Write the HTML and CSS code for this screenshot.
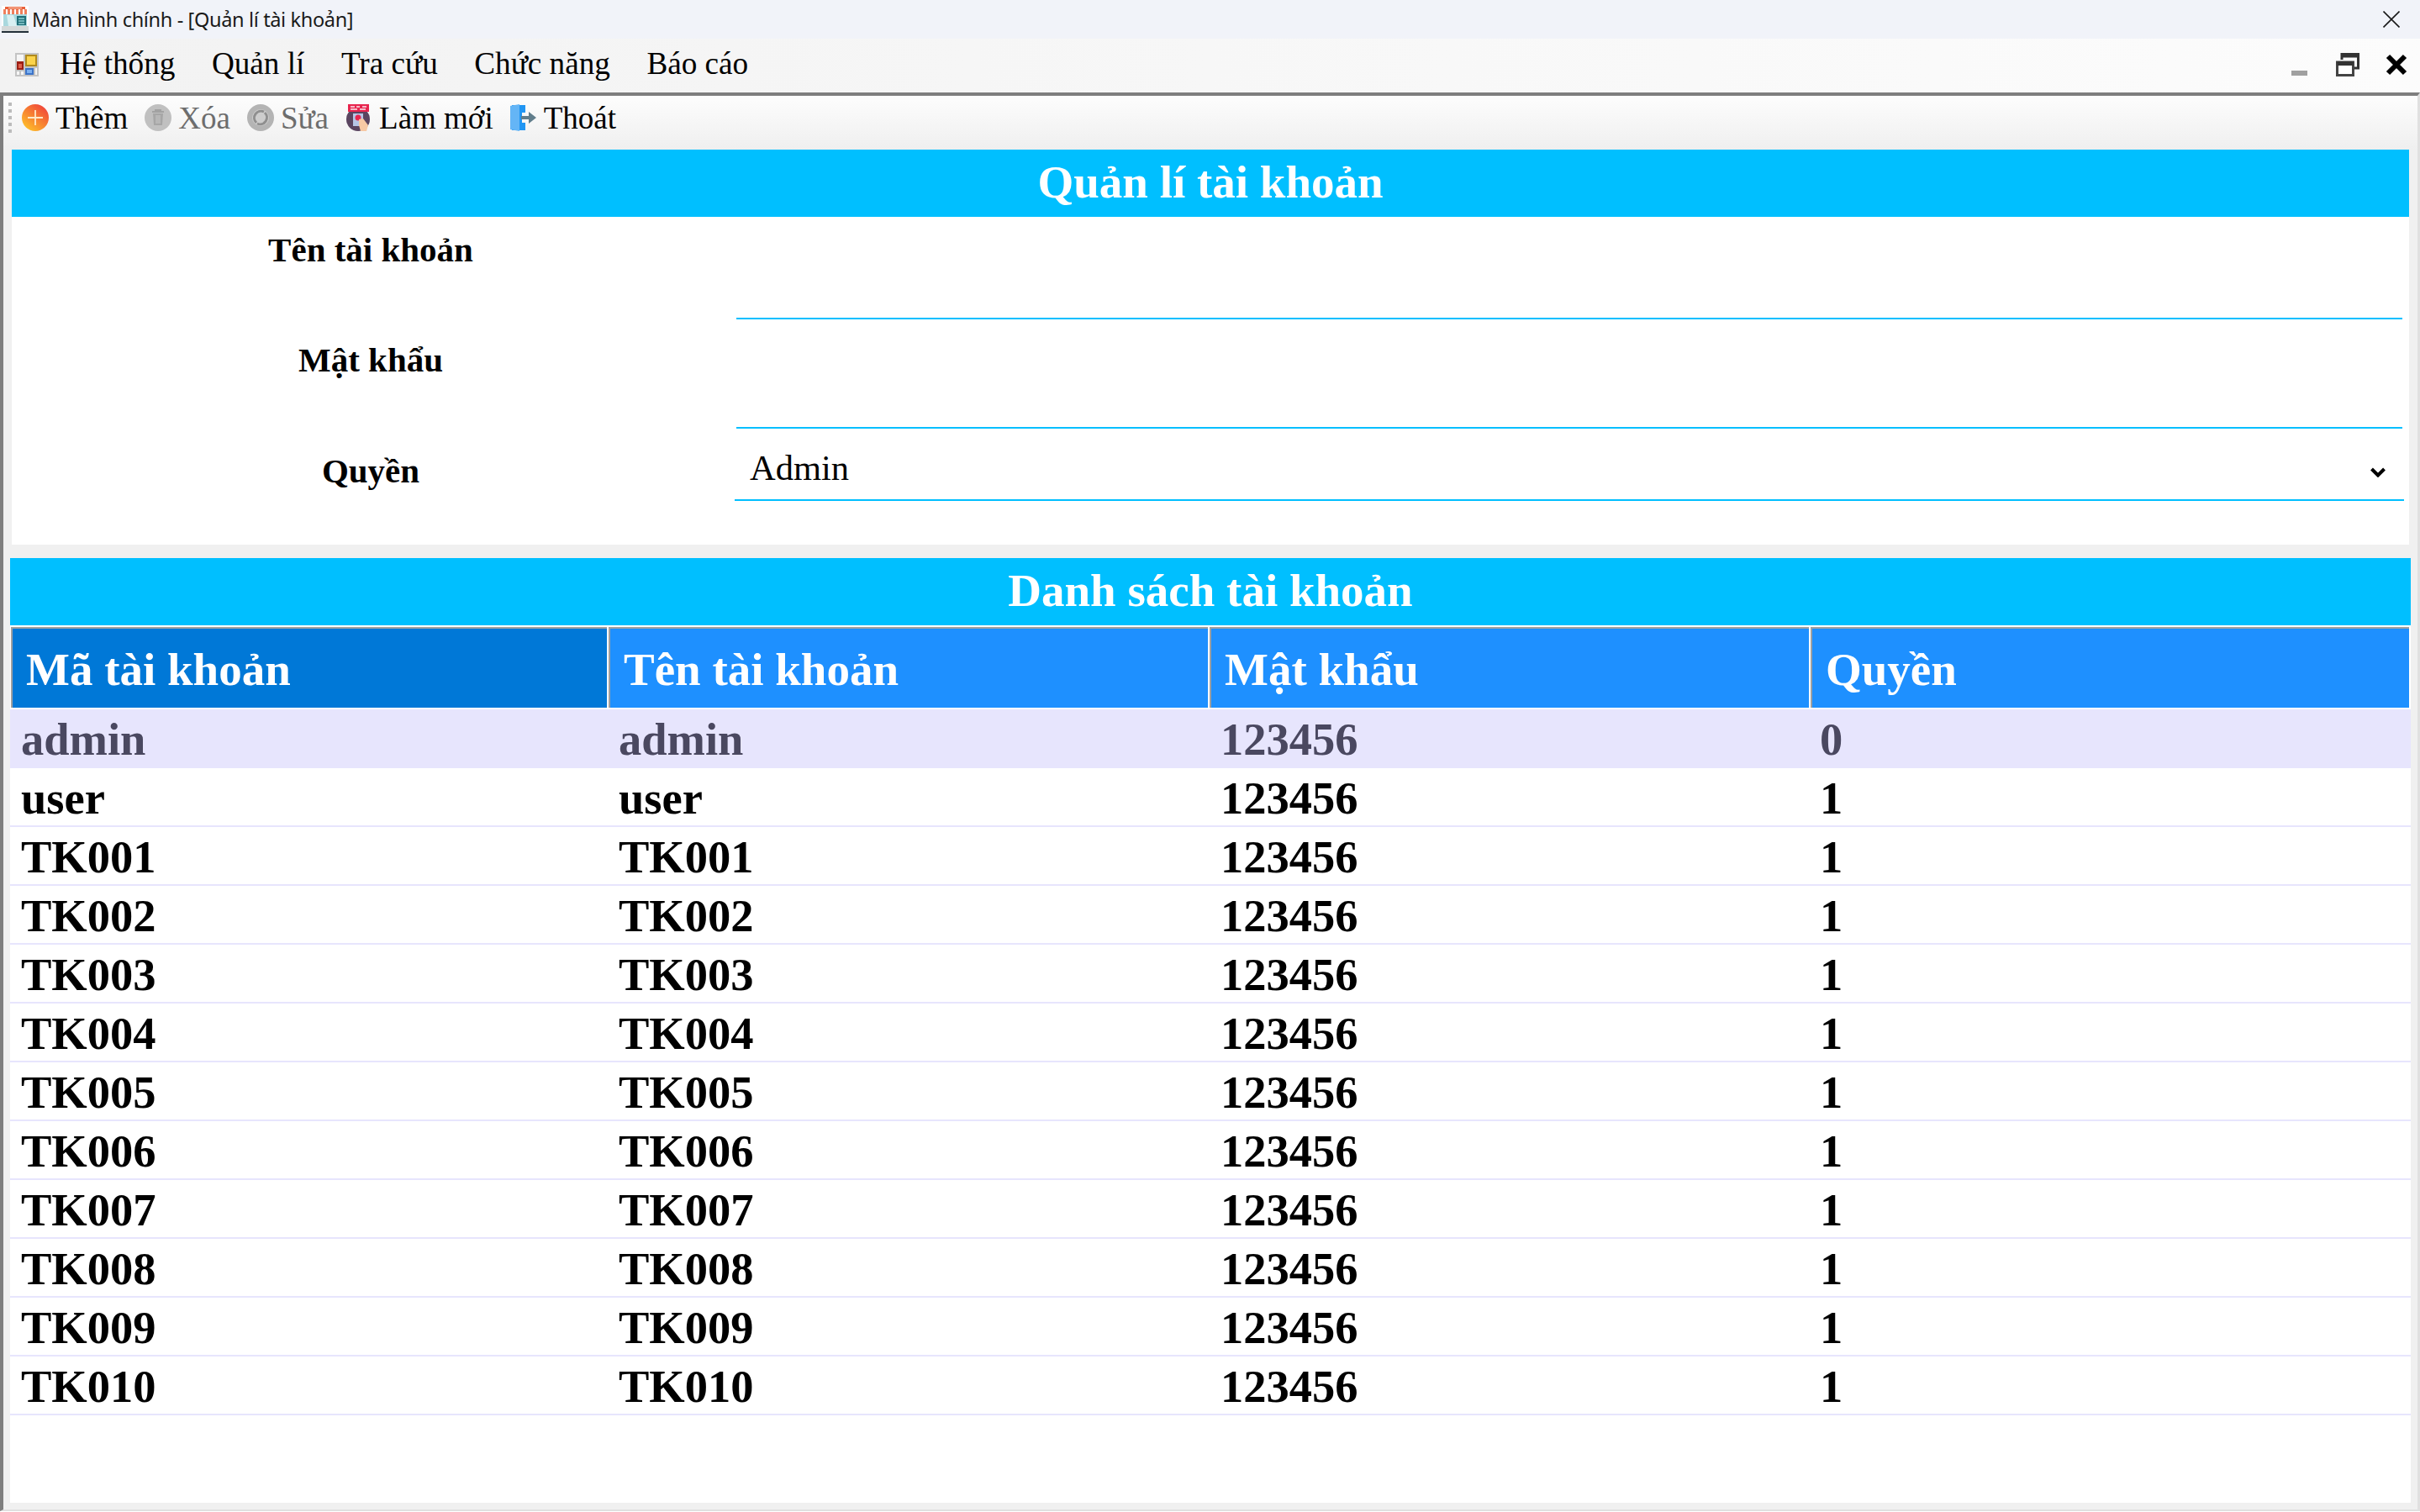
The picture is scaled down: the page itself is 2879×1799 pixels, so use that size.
FILE: index.html
```html
<!DOCTYPE html>
<html lang="vi">
<head>
    <meta charset="UTF-8">
    <meta name="viewport" content="width=device-width, initial-scale=1.0">
    <title>Màn hình chính - [Quản lí tài khoản]</title>
    <link rel="stylesheet" href="styles.css">
</head>
<body>
    <div class="titlebar">
        <svg class="app-icon" viewBox="0 0 32 32">
            <rect width="32" height="32" fill="#fff"/>
            <rect x="4" y="1" width="24" height="3" fill="#e8603c"/>
            <rect x="8" y="2" width="16" height="1" fill="#fbd2bc"/>
            <rect x="2" y="4" width="28" height="6" fill="#ef7f5c"/>
            <path d="M6 4v6M11 4v6M16 4v6M21 4v6M26 4v6" stroke="#fff" stroke-width="2"/>
            <rect x="2" y="10" width="28" height="14" fill="#a9d8de"/>
            <path d="M6 11H14L18 24H8Z" fill="#d8f0f2"/>
            <rect x="18" y="12" width="11" height="11" fill="#1f6f78"/>
            <path d="M20 15h7M20 18h7M20 21h7" stroke="#8fd0d2" stroke-width="1.500"/>
            <rect x="0" y="24" width="32" height="6" fill="#d4d8d8"/>
            <rect x="0" y="30" width="32" height="2" fill="#23303a"/>
        </svg>
        <span class="app-title">Màn hình chính - [Quản lí tài khoản]</span>
        <svg class="win-close" viewBox="0 0 20 20">
            <path d="M0.5 0.5L19.5 19.5M19.5 0.5L0.5 19.5" stroke="#1a1a1a" stroke-width="1.600"/>
        </svg>
    </div>

    <div class="menubar">
        <svg class="menu-icon" viewBox="0 0 28 28">
            <rect width="28" height="28" fill="#c4c4c4"/>
            <rect x="2" y="2" width="8" height="8" fill="#f6f6f6"/>
            <rect x="12" y="2" width="14" height="14" fill="#b08a1c"/>
            <rect x="14" y="4" width="10" height="10" fill="#fbd34a"/>
            <rect x="2" y="10" width="8" height="10" fill="#9c1f14"/>
            <rect x="4" y="13" width="4" height="5" fill="#e0604c"/>
            <rect x="12" y="18" width="10" height="8" fill="#3d74c8"/>
            <rect x="14" y="20" width="6" height="4" fill="#7cb0f0"/>
            <rect x="2" y="22" width="3" height="4" fill="#f6f6f6"/>
            <rect x="7" y="22" width="3" height="4" fill="#f6f6f6"/>
            <rect x="24" y="18" width="2" height="8" fill="#f6f6f6"/>
        </svg>
        <nav class="menu">
            <a>Hệ thống</a>
            <a>Quản lí</a>
            <a>Tra cứu</a>
            <a>Chức năng</a>
            <a>Báo cáo</a>
        </nav>
        <div class="mdi-buttons">
            <span class="mdi-min"></span>
            <svg class="mdi-restore" viewBox="0 0 28 28">
                <path d="M7 8V1.500H26.500V18H21" fill="none" stroke="#333" stroke-width="3"/>
                <rect x="7" y="2" width="19" height="3.500" fill="#333"/>
                <rect x="1.500" y="11" width="19" height="15.500" fill="#fff" stroke="#444" stroke-width="3"/>
                <rect x="1.500" y="10" width="19" height="5" fill="#333"/>
            </svg>
            <svg class="mdi-close" viewBox="0 0 26 26">
                <path d="M3 3L23 23M23 3L3 23" stroke="#000" stroke-width="6"/>
            </svg>
        </div>
    </div>

    <div class="frame">
        <div class="toolbar">
            <span class="grip"></span>
            <button class="tool">
                <svg viewBox="0 0 32 32">
                    <defs>
                        <linearGradient id="plus-bg" x1="0.9" y1="0" x2="0.1" y2="1">
                            <stop offset="0" stop-color="#ef3b3b"/>
                            <stop offset="1" stop-color="#ffc928"/>
                        </linearGradient>
                    </defs>
                    <circle cx="16" cy="16" r="16" fill="url(#plus-bg)"/>
                    <path d="M16 7V25M7 16H25" stroke="#ffe9c8" stroke-width="1.800"/>
                </svg>
                Thêm
            </button>
            <button class="tool disabled">
                <svg viewBox="0 0 32 32">
                    <circle cx="16" cy="16" r="16" fill="#c0c0c0"/>
                    <path d="M9 9H23M13 9V7H19V9" fill="none" stroke="#a2a2a2" stroke-width="2"/>
                    <path d="M10 11H22L21 25H11Z" fill="#a6a6a6"/>
                    <path d="M14 13V23M16 13V23M18 13V23" stroke="#c8c8c8" stroke-width="1"/>
                </svg>
                Xóa
            </button>
            <button class="tool disabled">
                <svg viewBox="0 0 32 32">
                    <circle cx="16" cy="16" r="16" fill="#b4b4b4"/>
                    <circle cx="16" cy="16" r="10" fill="#cdcdcd"/>
                    <path d="M20 9A8 8 0 0 0 11 22M12 23A8 8 0 0 0 21 10" fill="none" stroke="#8f8f8f" stroke-width="3"/>
                </svg>
                Sửa
            </button>
            <button class="tool">
                <svg viewBox="0 0 32 32">
                    <circle cx="15" cy="18" r="14" fill="#5a4560"/>
                    <rect x="3" y="0" width="25" height="9" fill="#e8254f"/>
                    <path d="M6 3h5M13 3h4M20 3h5M6 6h8M17 6h7" stroke="#f6b8c6" stroke-width="2"/>
                    <rect x="9" y="11" width="12" height="15" fill="#b6c6e6"/>
                    <circle cx="15" cy="16" r="3.500" fill="#e8254f"/>
                    <path d="M16 18L21 17L27 25L25 32H18L16 25Z" fill="#f7c9a4"/>
                </svg>
                Làm mới
            </button>
            <button class="tool">
                <svg viewBox="0 0 32 32">
                    <path d="M2 1H18V10H14V22H18V31H2Z" fill="#2196f3"/>
                    <path d="M0 2L11 0V32L0 30Z" fill="#64b5f6"/>
                    <path d="M13 14H22V9L31 16L22 23V18H13Z" fill="#607d8b"/>
                </svg>
                Thoát
            </button>
        </div>

        <div class="content">
            <h2 class="band">Quản lí tài khoản</h2>
            <form class="account-form">
                <label class="field-label label-name">Tên tài khoản</label>
                <div class="field-line"></div>
                <label class="field-label label-pass">Mật khẩu</label>
                <div class="field-line"></div>
                <label class="field-label label-role">Quyền</label>
                <div class="field-select">
                    <span>Admin</span>
                    <svg class="chevron" viewBox="0 0 18 12">
                        <path d="M1.500 2L9 9.500L16.500 2" fill="none" stroke="#000" stroke-width="4"/>
                    </svg>
                </div>
            </form>

            <h2 class="band band-wide">Danh sách tài khoản</h2>
            <div class="grid-head">
                <div class="head-cell active">Mã tài khoản</div>
                <div class="head-cell">Tên tài khoản</div>
                <div class="head-cell">Mật khẩu</div>
                <div class="head-cell">Quyền</div>
            </div>
            <div class="grid-body">
                <div class="row selected"><span>admin</span><span>admin</span><span>123456</span><span>0</span></div>
                <div class="row"><span>user</span><span>user</span><span>123456</span><span>1</span></div>
                <div class="row"><span>TK001</span><span>TK001</span><span>123456</span><span>1</span></div>
                <div class="row"><span>TK002</span><span>TK002</span><span>123456</span><span>1</span></div>
                <div class="row"><span>TK003</span><span>TK003</span><span>123456</span><span>1</span></div>
                <div class="row"><span>TK004</span><span>TK004</span><span>123456</span><span>1</span></div>
                <div class="row"><span>TK005</span><span>TK005</span><span>123456</span><span>1</span></div>
                <div class="row"><span>TK006</span><span>TK006</span><span>123456</span><span>1</span></div>
                <div class="row"><span>TK007</span><span>TK007</span><span>123456</span><span>1</span></div>
                <div class="row"><span>TK008</span><span>TK008</span><span>123456</span><span>1</span></div>
                <div class="row"><span>TK009</span><span>TK009</span><span>123456</span><span>1</span></div>
                <div class="row"><span>TK010</span><span>TK010</span><span>123456</span><span>1</span></div>
            </div>
        </div>
    </div>
</body>
</html>
```

FILE: styles.css
```css
html, body {
    height: 100%;
}

body {
    margin: 0;
    overflow: hidden;
    background-color: #fff;
    font-family: "Liberation Serif", serif;
    color: #000;
    display: flex;
    flex-direction: column;
}

.titlebar {
    height: 46px;
    flex: none;
    background-color: #f1f3f9;
    display: flex;
    align-items: center;
    padding: 0 24px 0 2px;
}

.app-icon {
    width: 32px;
    height: 32px;
    margin-right: 4px;
}

.app-title {
    font-family: "Noto Sans", sans-serif;
    font-size: 23.500px;
    letter-spacing: -0.350px;
    color: #1a1a1a;
    flex: 1;
}

.win-close {
    width: 20px;
    height: 20px;
}

.menubar {
    height: 64px;
    flex: none;
    box-sizing: border-box;
    background: linear-gradient(to right, #f2f2f2, #fcfcfc);
    display: flex;
    align-items: center;
    padding: 0 15px 2px 18px;
}

.menu-icon {
    width: 28px;
    height: 28px;
}

.menu {
    flex: 1;
    display: flex;
    gap: 43.500px;
    margin: 0 0 3px 25px;
}

.menu a {
    font-size: 37.200px;
}

.mdi-buttons {
    display: flex;
    align-items: center;
}

.mdi-min {
    width: 19px;
    height: 6px;
    background-color: #a0a0a0;
    margin: 20px 34px 0 0;
}

.mdi-restore {
    width: 28px;
    height: 28px;
    margin-right: 31px;
}

.mdi-close {
    width: 26px;
    height: 26px;
}

.frame {
    height: 1688px;
    flex: none;
    box-sizing: border-box;
    background-color: #f0f0f0;
    border-top: 4px solid #7e7e7e;
    border-left: 4px solid #7e7e7e;
    border-right: 3px solid #e0e0e0;
    border-bottom: 2px solid #e0e0e0;
}

.toolbar {
    height: 64px;
    box-sizing: border-box;
    background: linear-gradient(#fdfdfd, #efefef);
    display: flex;
    align-items: center;
    padding: 0 0 12px 6px;
}

.grip {
    width: 4px;
    height: 36px;
    margin-right: 12px;
    background: repeating-linear-gradient(#bcbcbc 0 4px, transparent 4px 8px);
}

.tool {
    border: none;
    background: none;
    padding: 0;
    margin-right: 20px;
    display: flex;
    align-items: center;
    gap: 8px;
    font-family: inherit;
    font-size: 37px;
    color: #000;
}

.tool svg {
    width: 32px;
    height: 32px;
}

.tool.disabled {
    color: #6d6d6d;
}

.content {
    height: 1610px;
    padding: 0 8px;
    display: flex;
    flex-direction: column;
}

.band {
    height: 80px;
    margin: 0 2px;
    flex: none;
    background-color: #00bfff;
    color: #fff;
    font-size: 55px;
    font-weight: bold;
    line-height: 78px;
    text-align: center;
}

.band-wide {
    margin: 0;
}

.account-form {
    height: 390px;
    flex: none;
    margin: 0 2px 16px;
    background-color: #fff;
    display: grid;
    grid-template-columns: 854px 1fr;
    grid-template-rows: 122px 130px 1fr;
}

.field-label {
    font-size: 41px;
    font-weight: bold;
    text-align: center;
}

.label-name {
    padding-top: 15px;
}

.label-pass {
    padding-top: 24px;
}

.label-role {
    padding-top: 26px;
}

.field-line {
    margin: 0 8px;
    border-bottom: 2px solid #00bfff;
}

.field-select {
    height: 86px;
    box-sizing: border-box;
    margin: 0 6px;
    padding: 22px 22px 0 18px;
    border-bottom: 2px solid #00bfff;
    display: flex;
    justify-content: space-between;
    font-size: 42.500px;
}

.chevron {
    width: 18px;
    height: 12px;
    margin-top: 24px;
}

.grid-head {
    height: 98px;
    flex: none;
    box-sizing: border-box;
    background-color: #fff;
    padding: 2px 2px 0 1px;
    display: grid;
    grid-template-columns: 709px 713px 713px 1fr;
    gap: 0 2px;
}

.head-cell {
    background-color: #1e90ff;
    border-top: 2px solid #a0a0a0;
    border-left: 2px solid #a0a0a0;
    color: #fff;
    font-size: 55px;
    font-weight: bold;
    line-height: 92px;
    padding: 3px 0 0 16px;
}

.head-cell.active {
    background-color: #0078d7;
}

.grid-body {
    background-color: #fff;
    flex: 1;
    padding-top: 2px;
}

.row {
    height: 70px;
    box-sizing: border-box;
    border-bottom: 2px solid #e7e5fd;
    display: grid;
    grid-template-columns: 711px 716px 713px 1fr;
    font-size: 54.500px;
    font-weight: bold;
    line-height: 72px;
}

.row span {
    padding-left: 13px;
}

.row.selected {
    background-color: #e7e5fd;
    color: #4a4860;
}
```
